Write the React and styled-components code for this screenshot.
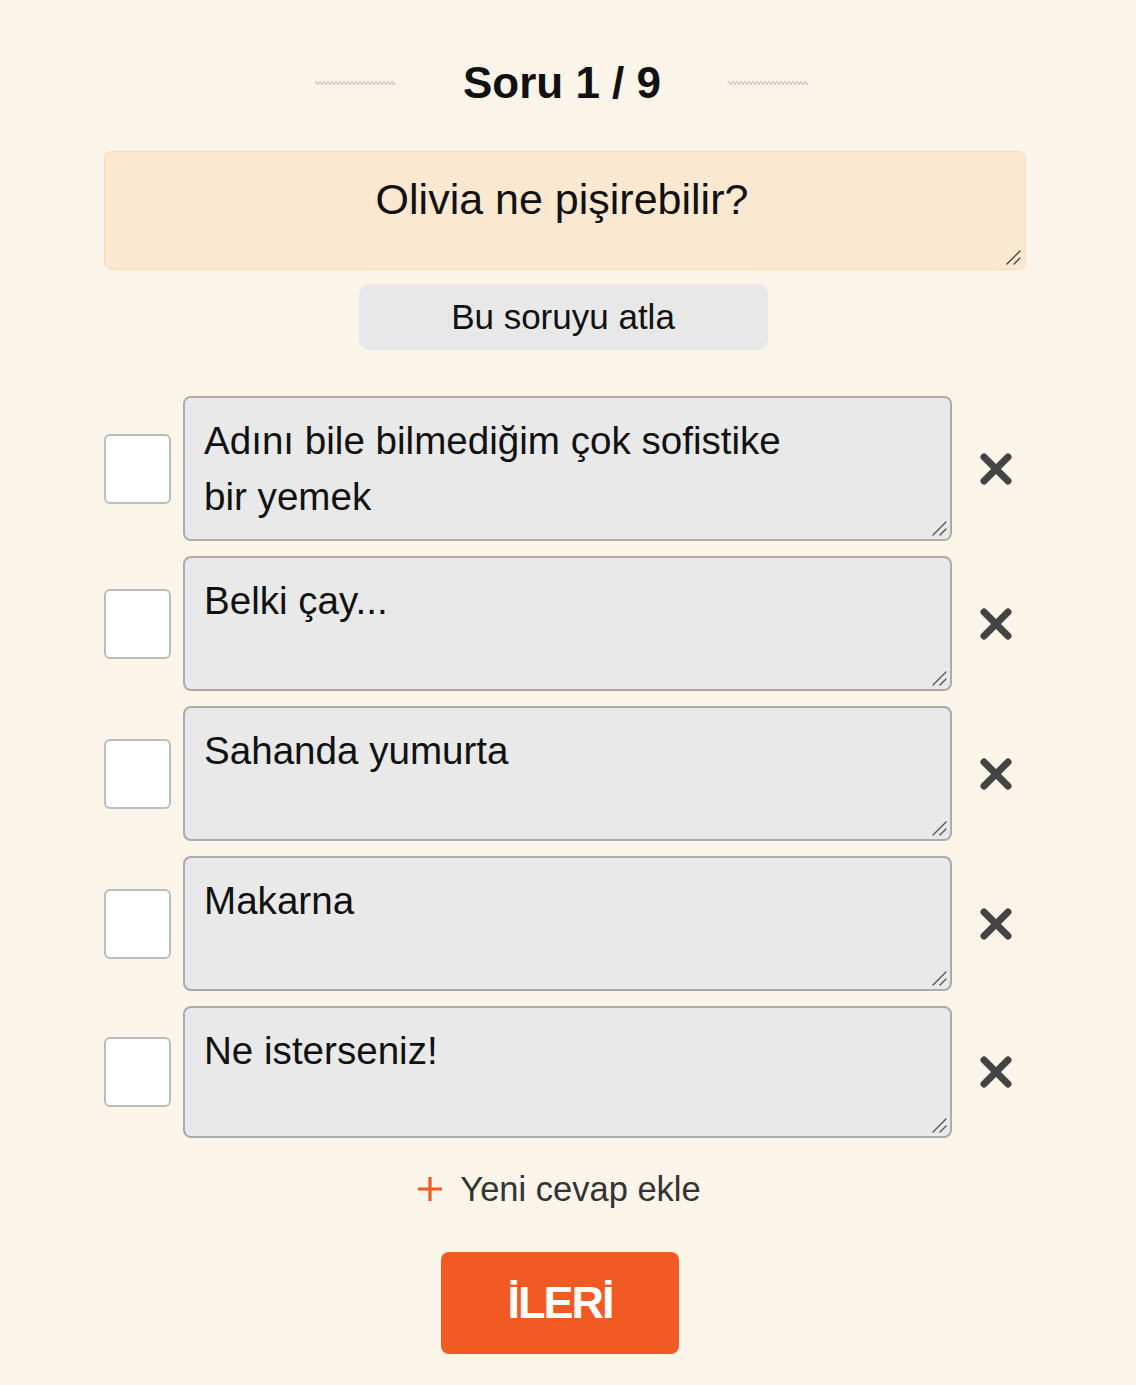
import React from "react";
import styled, { createGlobalStyle } from "styled-components";

const GlobalStyle = createGlobalStyle`
  * { box-sizing: border-box; }
  body {
    margin: 0;
    background: #fbf4e9;
    font-family: "Liberation Sans", Arial, sans-serif;
    color: #111;
  }
`;

const Page = styled.div`
  display: flex;
  flex-direction: column;
  align-items: center;
  padding: 58px 110px 30px 104px;
`;

const Header = styled.div`
  display: flex;
  align-items: center;
  gap: 66px;
  margin-right: 6px;
`;

const Title = styled.h1`
  margin: 0;
  font-size: 44px;
  line-height: 50px;
  font-weight: 700;
  color: #111;
`;

const Field = styled.div`
  position: relative;
  flex: none;
  width: ${(p) => p.$w || "100%"};
  margin-top: ${(p) => p.$mt || 0}px;
  margin-left: ${(p) => p.$ml || 0}px;
`;

const Grip = styled.svg`
  position: absolute;
  right: 5px;
  bottom: 5px;
  pointer-events: none;
`;

const QuestionBox = styled.textarea`
  display: block;
  width: 100%;
  height: 119px;
  padding: 23px 20px 0 14px;
  background: #fae8d0;
  border: 1px solid #f4dcbd;
  border-radius: 8px;
  font-family: "Liberation Sans", Arial, sans-serif;
  font-size: 43px;
  line-height: 48px;
  text-align: center;
  color: #111;
  outline: none;
  resize: none;
`;

const SkipButton = styled.button`
  margin: 14px 4px 0 0;
  width: 409px;
  height: 66px;
  border: none;
  border-radius: 10px;
  background: #e8e8e8;
  font-family: "Liberation Sans", Arial, sans-serif;
  font-size: 35px;
  color: #111;
  cursor: pointer;
`;

const AnswerList = styled.div`
  display: flex;
  flex-direction: column;
  gap: 15px;
  width: 100%;
  margin-top: 46px;
`;

const AnswerRow = styled.div`
  display: flex;
  align-items: center;
`;

const Check = styled.span`
  display: block;
  width: 67px;
  height: 70px;
  flex: none;
  background: #fff;
  border: 2px solid #bdbdbd;
  border-radius: 6px;
`;

const AnswerInput = styled.textarea`
  display: block;
  width: 100%;
  height: ${(p) => p.$h}px;
  padding: 15px 19px;
  background: #e9e9e9;
  border: 2px solid #ababab;
  border-radius: 8px;
  font-family: "Liberation Sans", Arial, sans-serif;
  font-size: 38.6px;
  line-height: 56px;
  color: #111;
  outline: none;
  resize: none;
`;

const RemoveButton = styled.button`
  flex: 1;
  display: flex;
  justify-content: center;
  align-items: center;
  padding: 0 0 0 14px;
  background: none;
  border: none;
  cursor: pointer;
`;

const AddButton = styled.button`
  display: flex;
  align-items: center;
  gap: 17px;
  margin: 31px 12px 0 0;
  padding: 0;
  background: none;
  border: none;
  font-family: "Liberation Sans", Arial, sans-serif;
  font-size: 34.5px;
  line-height: 40px;
  color: #333;
  cursor: pointer;
`;

const NextButton = styled.button`
  margin: 43px 10px 0 0;
  width: 238px;
  height: 102px;
  border: none;
  border-radius: 8px;
  background: #f25a24;
  color: #fff;
  font-family: "Liberation Sans", Arial, sans-serif;
  font-size: 45px;
  font-weight: 700;
  letter-spacing: -2px;
  cursor: pointer;
`;

const Squiggle = () => {
  let d = "M1 4";
  for (let i = 0; i < 20; i++) d += " q1 -3 2 0 t2 0";
  return (
    <svg width="83" height="8" viewBox="0 0 83 8">
      <path d={d} fill="none" stroke="#c9c6c1" strokeWidth="1.2" />
    </svg>
  );
};

const ResizeGrip = ({ color = "#555" }) => (
  <Grip width="16" height="16" viewBox="0 0 16 16">
    <path
      d="M2 15 L15 2 M9 15 L15 9"
      stroke={color}
      strokeWidth="1.4"
      strokeLinecap="round"
    />
  </Grip>
);

const Cross = () => (
  <svg width="34" height="34" viewBox="0 0 34 34">
    <path
      d="M5 5 L29 29 M29 5 L5 29"
      stroke="#444"
      strokeWidth="7"
      strokeLinecap="round"
    />
  </svg>
);

const Plus = () => (
  <svg width="26" height="26" viewBox="0 0 26 26">
    <path d="M13 1 V25 M1 13 H25" stroke="#f05a22" strokeWidth="3.2" />
  </svg>
);

const answers = [
  { text: "Adını bile bilmediğim çok sofistike\nbir yemek", h: 145 },
  { text: "Belki çay...", h: 135 },
  { text: "Sahanda yumurta", h: 135 },
  { text: "Makarna", h: 135 },
  { text: "Ne isterseniz!", h: 132 },
];

export default function App() {
  return (
    <>
      <GlobalStyle />
      <Page>
        <Header>
          <Squiggle />
          <Title>Soru 1 / 9</Title>
          <Squiggle />
        </Header>
        <Field $mt={43}>
          <QuestionBox defaultValue="Olivia ne pişirebilir?" />
          <ResizeGrip color="#444" />
        </Field>
        <SkipButton>Bu soruyu atla</SkipButton>
        <AnswerList>
          {answers.map((a, i) => (
            <AnswerRow key={i}>
              <Check />
              <Field $w="769px" $ml={12}>
                <AnswerInput $h={a.h} defaultValue={a.text} />
                <ResizeGrip />
              </Field>
              <RemoveButton aria-label="Sil">
                <Cross />
              </RemoveButton>
            </AnswerRow>
          ))}
        </AnswerList>
        <AddButton>
          <Plus />
          Yeni cevap ekle
        </AddButton>
        <NextButton>İLERİ</NextButton>
      </Page>
    </>
  );
}
